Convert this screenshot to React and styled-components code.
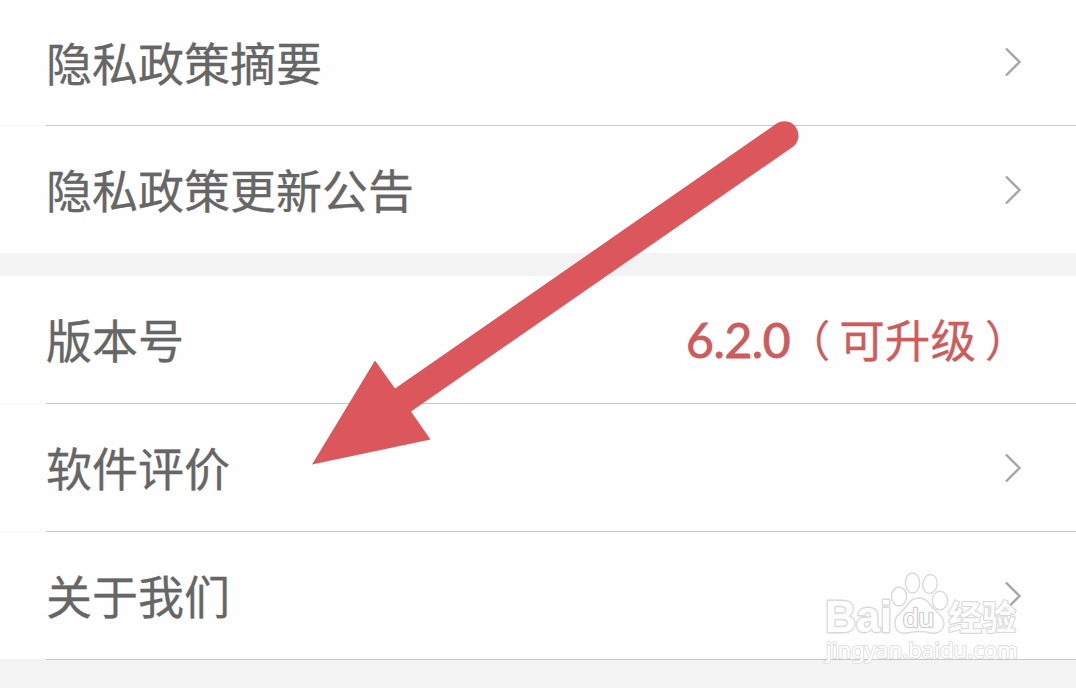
import * as React from 'react'
import styled, {createGlobalStyle} from 'styled-components'


const GlobalStyle = createGlobalStyle`
  body {
    margin: 0;
    background: #f3f3f3;
    overflow: hidden;
  }
`

const Page = styled.div`
  position: relative;
  display: flex;
  flex-direction: column;
  width: 1076px;
  height: 688px;
  overflow: hidden;
  background: #f3f3f3;
  font-family: 'Noto Sans CJK SC', sans-serif;
`

const Group = styled.div`
  display: flex;
  flex-direction: column;
  margin-bottom: 23px;
  background: #fefefe;
`

const Row = styled.div`
  display: flex;
  flex: none;
  flex-direction: column;
  height: ${props => props.height || 128}px;
`

const RowContent = styled.div`
  display: flex;
  flex: 1;
  align-items: center;
  justify-content: space-between;
  padding: 0 53px 0 46px;
`

const Divider = styled.div`
  height: 1px;
  background: linear-gradient(to right, ${props => props.edge || '#f6f6f6'} 46px, #c8c8c8 46px);
`

const Label = styled.div`
  padding-bottom: 4px;
  font-size: 46px;
  line-height: 60px;
  color: #666;
  -webkit-text-stroke: 0.3px #666;
`

const Version = styled.div`
  display: flex;
  align-items: center;
  padding-bottom: 4px;
  font-size: 45.6px;
  line-height: 60px;
  color: #cd5c5c;
  -webkit-text-stroke: 0.3px #cd5c5c;
`

const Digits = styled.span`
  padding-top: 4px;
  font-family: Lato, sans-serif;
  font-size: 48px;
  letter-spacing: -0.4px;
  -webkit-text-stroke: 0.9px #cd5c5c;
`

const Note = styled.span`
  margin: 0 9px 0 9px;
`

const Paren = styled.span`
  display: flex;
  justify-content: ${props => props.side === 'left' ? 'flex-end' : 'flex-start'};
  width: 38px;
  padding-left: ${props => props.side === 'left' ? 2 : 0}px;
  font-size: 43px;
`

const Chevron = styled.svg`
  flex: none;
  width: 20px;
  height: 32px;
  margin-bottom: ${props => props.$lift || 0}px;
`

const Arrow = styled.svg`
  position: absolute;
  left: 300px;
  top: 110px;
  width: 510px;
  height: 366px;
`

const Watermark = styled.svg`
  position: absolute;
  left: 815px;
  top: 565px;
  width: 215px;
  height: 105px;
`

const groups = [
  [
    {name: '隐私政策摘要', height: 126, lift: 2},
    {name: '隐私政策更新公告', height: 127, last: true}
  ],
  [
    {name: '版本号', version: '6.2.0', note: '可升级'},
    {name: '软件评价'},
    {name: '关于我们', edge: '#f3f3f3'}
  ]
]

const Item = ({item}) => (
  <Row height={item.height}>
    <RowContent>
      <Label>{item.name}</Label>
      {item.version ? (
        <Version>
          <Digits>{item.version}</Digits>
          <Paren side="left">（</Paren>
          <Note>{item.note}</Note>
          <Paren side="right">）</Paren>
        </Version>
      ) : (
        <Chevron viewBox="0 0 20 32" $lift={item.lift}>
          <path d="M3 2.5 16.5 16 3 29.5" fill="none" stroke="#a6a6a6" strokeWidth="2.4" />
        </Chevron>
      )}
    </RowContent>
    {!item.last && <Divider edge={item.edge} />}
  </Row>
)

const BaiduMark = () => (
  <Watermark viewBox="815 565 215 105">
    <g fill="#fff" stroke="#dadada" strokeWidth="1.4" strokeLinejoin="round">
      <ellipse cx="899" cy="596.5" rx="7.5" ry="9.5" />
      <ellipse cx="912.5" cy="583" rx="7.2" ry="10" />
      <ellipse cx="930" cy="584" rx="7.2" ry="9.5" transform="rotate(8 930 584)" />
      <ellipse cx="940" cy="600.5" rx="7.7" ry="9.3" />
      <path d="M919 598c-9 0-11 7-16 12-5 5-9 8-8 15 1 7 6 9 12 8 9-2 16-2 24 0 7 1 12-2 13-9 0-7-5-10-10-15-5-5-7-11-15-11z" />
      <g fontFamily="'Liberation Sans', Arial, sans-serif" paintOrder="stroke">
        <text x="825" y="632" fontSize="44" fontWeight="700" textLength="67" lengthAdjust="spacingAndGlyphs" strokeWidth="2.8">Bai</text>
        <text x="903" y="627" fontSize="25" textLength="31" lengthAdjust="spacingAndGlyphs" stroke="#cfcfcf" strokeWidth="2.4">du</text>
      </g>
      <text x="948" y="630" fontSize="34" fontWeight="700" fontFamily="'Noto Sans CJK SC', sans-serif" textLength="68" lengthAdjust="spacingAndGlyphs" strokeWidth="2.2" paintOrder="stroke" fillOpacity="0.85">经验</text>
      <text x="826" y="658" fontSize="22" fontFamily="'Noto Sans', sans-serif" textLength="192" lengthAdjust="spacingAndGlyphs" stroke="#e0e0e0" strokeWidth="2" paintOrder="stroke">jingyan.baidu.com</text>
    </g>
  </Watermark>
)

class App extends React.Component {
  render() {
    return (
      <Page>
        <GlobalStyle />
        {groups.map((items, i) =>
          <Group key={i}>
            {items.map(item => <Item key={item.name} item={item} />)}
          </Group>
        )}
        <Arrow viewBox="300 110 510 366">
          <path d="M312 464.500 375 360.500 395 388.500 777 123.300A14.200 14.200 0 0 1 793 146.700L411 411.500 430.500 439.500Z" fill="#db575c" />
        </Arrow>
        <BaiduMark />
      </Page>
    )
  }
}

export default App
